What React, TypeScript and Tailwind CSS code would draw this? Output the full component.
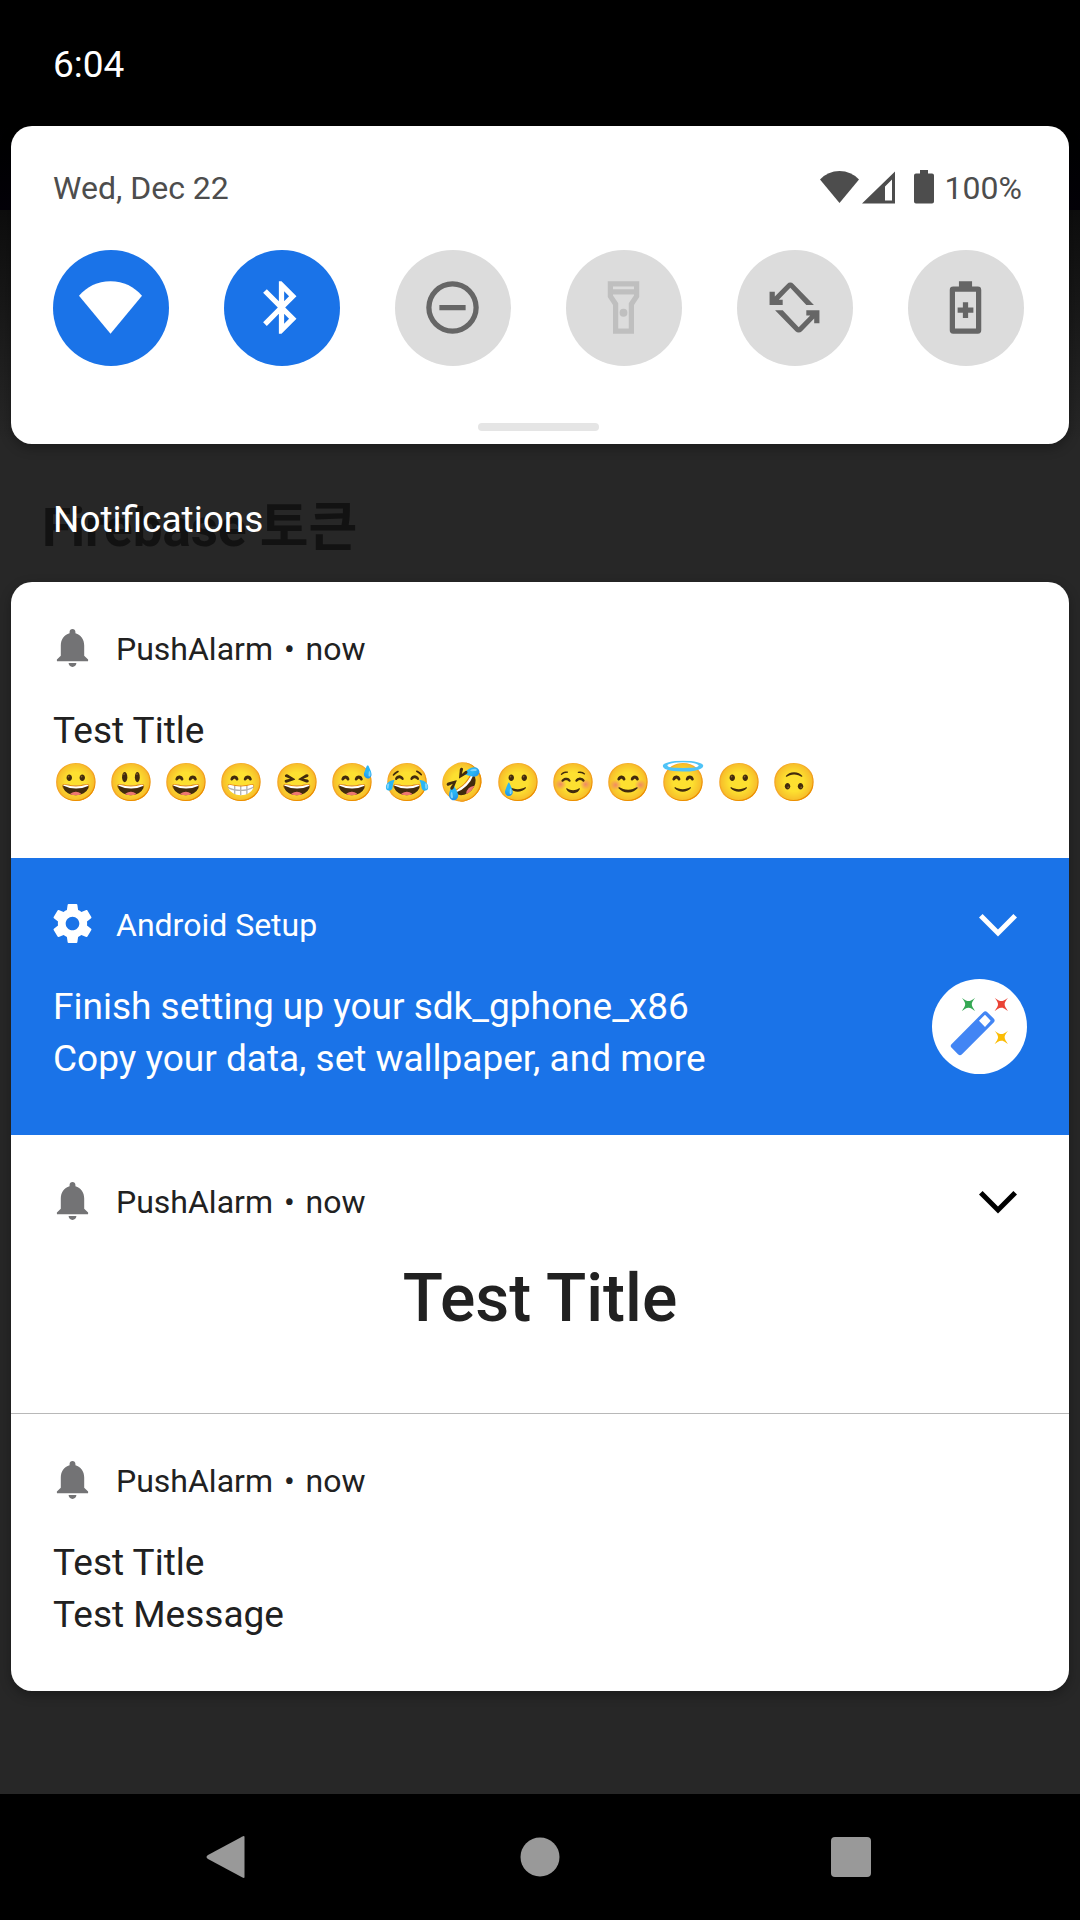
import type { ReactNode } from "react";

function Tile({ label, state, children }: { label: string; state: "on" | "off" | "disabled"; children: ReactNode }) {
  const tone =
    state === "on"
      ? "bg-[#1a73e8] text-white"
      : state === "off"
        ? "bg-[#dcdcdc] text-[#666666]"
        : "bg-[#dcdcdc] text-[#bfbfbf]";
  return (
    <button
      type="button"
      aria-label={label}
      aria-pressed={state === "on"}
      disabled={state === "disabled"}
      className={`flex size-[116px] items-center justify-center rounded-full pr-px pb-px ${tone}`}
    >
      <svg viewBox="0 0 24 24" className="size-[63px]" fill="currentColor" aria-hidden="true">
        {children}
      </svg>
    </button>
  );
}

function Bell() {
  return (
    <svg viewBox="2 2 20 20" className="size-[39px] text-[#737375]" fill="currentColor" aria-hidden="true">
      <path d="M12 22c1.1 0 2-.9 2-2h-4c0 1.1.89 2 2 2zM18 16.2v-5.2c0-3.07-1.64-5.64-4.5-6.32V4c0-.83-.67-1.5-1.5-1.5s-1.5.67-1.5 1.5v.68C7.63 5.36 6 7.92 6 11v5.2l-2 2v.8h16v-.8l-2-2z" />
    </svg>
  );
}

function Gear() {
  return (
    <svg viewBox="2 2 20 20" className="size-[39px]" fill="currentColor" aria-hidden="true">
      <path d="M19.43 12.98c.04-.32.07-.64.07-.98s-.03-.66-.07-.98l2.11-1.65c.19-.15.24-.42.12-.64l-2-3.46c-.12-.22-.39-.3-.61-.22l-2.49 1c-.52-.4-1.08-.73-1.69-.98l-.38-2.65C14.46 2.18 14.25 2 14 2h-4c-.25 0-.46.18-.49.42l-.38 2.65c-.61.25-1.17.59-1.69.98l-2.49-1c-.23-.09-.49 0-.61.22l-2 3.46c-.13.22-.07.49.12.64l2.11 1.65c-.04.32-.07.65-.07.98s.03.66.07.98l-2.11 1.65c-.19.15-.24.42-.12.64l2 3.46c.12.22.39.3.61.22l2.49-1c.52.4 1.08.73 1.69.98l.38 2.65c.03.24.24.42.49.42h4c.25 0 .46-.18.49-.42l.38-2.65c.61-.25 1.17-.59 1.69-.98l2.49 1c.23.09.49 0 .61-.22l2-3.46c.12-.22.07-.49-.12-.64l-2.11-1.65zM12 15.5c-1.93 0-3.5-1.57-3.5-3.5s1.57-3.5 3.5-3.5 3.5 1.57 3.5 3.5-1.57 3.5-3.5 3.5z" />
    </svg>
  );
}

function Wand() {
  const star =
    "M-20-20C-9-12-5-10 0-10S9-12 20-20C12-9 10-5 10 0S12 9 20 20C9 12 5 10 0 10S-9 12-20 20C-12 9-10 5-10 0S-12-9-20-20z";
  return (
    <svg viewBox="0 0 285 285" className="size-[95px] shrink-0" aria-hidden="true">
      <circle cx="142.5" cy="142.5" r="142.5" fill="#fff" />
      <path
        fill="#4285f4"
        fillRule="evenodd"
        d="M58.500 195.500L154 99.500Q160 93.500 166 99.500L185 118.500Q191 124.500 185 130.500L90 225.500Q84 231.500 78 225.500L59 206.500Q53.500 201 58.500 195.500zM159 107L141 125L159 144L176 125z"
      />
      <path fill="#34a853" transform="translate(109.500 76)" d={star} />
      <path fill="#ea4335" transform="translate(208 76)" d={star} />
      <path fill="#fbbc04" transform="translate(208 175)" d={star} />
    </svg>
  );
}

function Notification({
  icon,
  app,
  time,
  expandable,
  className,
  chevron = "text-black",
  children,
}: {
  icon: ReactNode;
  app: string;
  time?: string;
  expandable?: boolean;
  className: string;
  chevron?: string;
  children: ReactNode;
}) {
  return (
    <article className={`px-[42px] pt-[46px] ${className}`}>
      <header className="flex items-start">
        {icon}
        <p className="ml-6 flex-1 text-[32px] leading-[43px]">
          {app}
          {time && (
            <>
              {" "}
              <span className="mx-[3px]">•</span> {time}
            </>
          )}
        </p>
        {expandable && (
          <button type="button" aria-label={`Expand ${app}`} className={`mt-2.5 mr-2.5 ${chevron}`}>
            <svg viewBox="0 0 38 23" className="h-[23px] w-[38px]" fill="currentColor" aria-hidden="true">
              <path d="M0 3.600L3.600 0 19 15.400 34.400 0 38 3.600 19 22.600z" />
            </svg>
          </button>
        )}
      </header>
      {children}
    </article>
  );
}

function Lines({ title, text }: { title: string; text: string }) {
  return (
    <div className="mt-[34px] text-[37px] leading-[52px]">
      <h2>{title}</h2>
      <p>{text}</p>
    </div>
  );
}

export default function App() {
  return (
    <div className="flex min-h-screen flex-col bg-[#272727] font-['Roboto','Noto_Color_Emoji','Noto_Sans_CJK_KR',sans-serif] text-white">
      <div className="flex-1 bg-[linear-gradient(to_bottom,#000_126px,#030008_210px,#0d0d0d_210px,#272727_440px)]">
        <div className="flex h-[126px] items-center px-[53px] pt-1">
          <time className="text-[37px] leading-[52px]">6:04</time>
        </div>

        <main className="px-[11px]">
          <section
            aria-label="Quick settings"
            className="flex flex-col rounded-[21px] bg-white pr-[45px] pb-[13px] pl-[42px] text-[#4d4d4d] shadow-[0_4px_12px_rgba(0,0,0,0.3)]"
          >
            <div className="mt-[41px] flex h-[42px] items-center pr-[2px] text-[32px]">
              <span className="flex-1">Wed, Dec 22</span>
              <div className="flex pb-[2px]">
                <svg viewBox="0 0 39 34" className="h-[34px] w-[39px]" fill="currentColor" aria-hidden="true">
                  <path d="M19.500 33L0 9.500Q8 1 19.500 1T39 9.500z" />
                </svg>
                <svg viewBox="0 0 33 34" className="ml-[3px] h-[34px] w-[33px]" fill="currentColor" aria-hidden="true">
                  <path fillRule="evenodd" d="M0 33.500L33 1.500V33.500zM23 16.500V30.500H30V9.500z" />
                </svg>
                <svg viewBox="0 0 20 34" className="ml-[19px] h-[34px] w-5" fill="currentColor" aria-hidden="true">
                  <path d="M6 0h8v3.500h4q2 0 2 2V31.500q0 2-2 2H2q-2 0-2-2V5.500q0-2 2-2h4z" />
                </svg>
              </div>
              <span className="ml-[11px]">100%</span>
            </div>

            <div className="mt-[41px] flex justify-between">
              <Tile label="Wi-Fi" state="on">
                <path d="M12 22L0 7.500C3 4.100 7 2 12 2S21 4.100 24 7.500z" />
              </Tile>
              <Tile label="Bluetooth" state="on">
                <path d="M17.710 7.710L12 2h-1v7.590L6.410 5 5 6.410 10.590 12 5 17.590 6.410 19 11 14.410V22h1l5.710-5.710-4.300-4.290 4.300-4.290zM13 5.830l1.880 1.880L13 9.590V5.830zm1.880 10.460L13 18.170v-3.760l1.880 1.880z" />
              </Tile>
              <Tile label="Do Not Disturb" state="off">
                <path
                  fillRule="evenodd"
                  d="M12 2a10 10 0 1 0 0 20a10 10 0 1 0 0-20zM12 4a8 8 0 1 1 0 16a8 8 0 1 1 0-16zM7 11h10v2H7z"
                />
              </Tile>
              <Tile label="Flashlight" state="disabled">
                <path
                  fillRule="evenodd"
                  d="M6 2v6l2 3v11h8V11l2-3V2H6zM16 4v1H8V4h8zM14 10.400V20h-4v-9.610l-2-3V7h8v.390L14 10.400z"
                />
                <circle cx="12" cy="14" r="1.500" />
              </Tile>
              <Tile label="Auto-rotate" state="off">
                <path d="M19.400 11L11.600 3a1.700 1.700 0 0 0-2.400 0L4.500 7.800V6h-2v5h5V9H6l4.400-4.500L16.500 11z" />
                <path
                  transform="rotate(180 12 12)"
                  d="M19.400 11L11.600 3a1.700 1.700 0 0 0-2.400 0L4.500 7.800V6h-2v5h5V9H6l4.400-4.500L16.500 11z"
                />
              </Tile>
              <Tile label="Battery Saver" state="off">
                <path
                  fillRule="evenodd"
                  d="M9.500 2h5v2h2.200Q18 4 18 5.300V20.700Q18 22 16.700 22H7.300Q6 22 6 20.700V5.300Q6 4 7.300 4H9.500zM8 6V20H16V6zM11 10h2v2h2v2h-2v2h-2v-2H9v-2h2z"
                />
              </Tile>
            </div>

            <div className="mt-[57px] h-2 w-[121px] self-center rounded-full bg-[#e5e5e5]" />
          </section>

          <div className="relative flex h-[138px] items-center px-[42px] pt-[14px]">
            <span
              aria-hidden="true"
              className="absolute top-[46px] left-[31px] text-[53px] leading-[76px] font-bold text-[#121212]"
            >
              Firebase 토큰
            </span>
            <h1 className="relative text-[37px] leading-[52px]">Notifications</h1>
          </div>

          <section
            aria-label="Notifications"
            className="overflow-hidden rounded-[21px] bg-white text-[#212121] shadow-[0_4px_12px_rgba(0,0,0,0.3)]"
          >
            <Notification icon={<Bell />} app="PushAlarm" time="now" className="pb-[49px]">
              <Lines title="Test Title" text="😀 😃 😄 😁 😆 😅 😂 🤣 🥲 ☺️ 😊 😇 🙂 🙃" />
            </Notification>
            <Notification
              icon={<Gear />}
              app="Android Setup"
              expandable
              className="bg-[#1a73e8] pb-[50px] text-white"
              chevron="text-white"
            >
              <div className="flex items-start justify-between">
                <Lines title="Finish setting up your sdk_gphone_x86" text="Copy your data, set wallpaper, and more" />
                <div className="mt-8">
                  <Wand />
                </div>
              </div>
            </Notification>
            <Notification icon={<Bell />} app="PushAlarm" time="now" expandable className="pb-[76px]">
              <h2 className="mt-[37px] text-center text-[66px] leading-[76px] font-medium">Test Title</h2>
            </Notification>
            <hr className="border-t border-[#b8b8b8]" />
            <Notification icon={<Bell />} app="PushAlarm" time="now" className="pb-[50px]">
              <Lines title="Test Title" text="Test Message" />
            </Notification>
          </section>
        </main>
      </div>

      <nav className="flex h-[126px] items-center justify-center gap-[271px] bg-black pr-1 text-[#999999]">
        <button type="button" aria-label="Back">
          <svg viewBox="0 0 44 42" className="h-[42px] w-11" fill="currentColor" aria-hidden="true">
            <path d="M39.500 1V41Q39.500 42.500 37.500 41.500L3 23Q0 21 3 19L37.500 .500Q39.500-.500 39.500 1z" />
          </svg>
        </button>
        <button type="button" aria-label="Home">
          <svg viewBox="0 0 40 40" className="size-10" fill="currentColor" aria-hidden="true">
            <circle cx="20" cy="20" r="19.500" />
          </svg>
        </button>
        <button type="button" aria-label="Recent apps">
          <svg viewBox="0 0 40 40" className="size-10" fill="currentColor" aria-hidden="true">
            <rect width="40" height="40" rx="4" />
          </svg>
        </button>
      </nav>
    </div>
  );
}
